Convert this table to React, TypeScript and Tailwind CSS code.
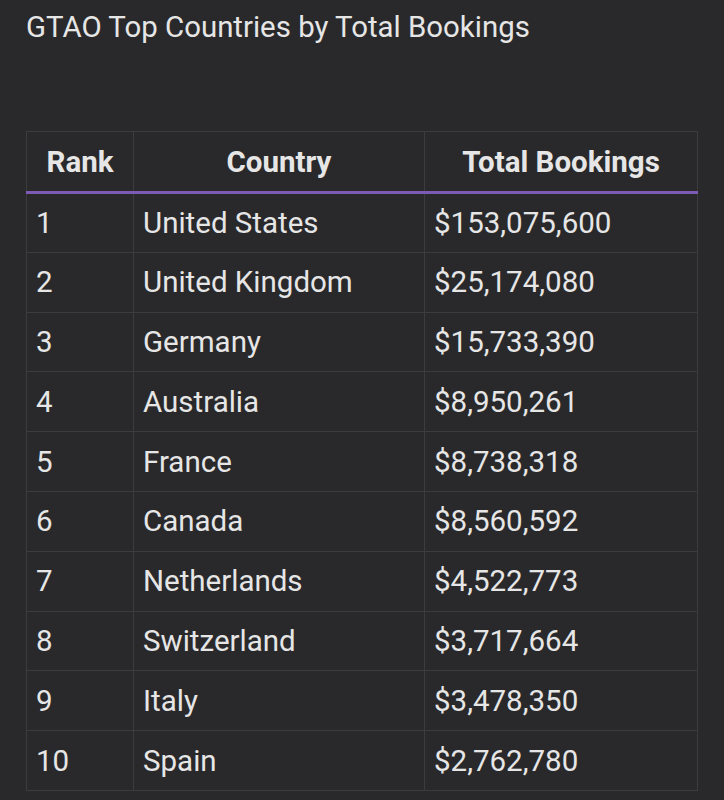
const rows = [
  { rank: 1, country: 'United States', total: '$153,075,600' },
  { rank: 2, country: 'United Kingdom', total: '$25,174,080' },
  { rank: 3, country: 'Germany', total: '$15,733,390' },
  { rank: 4, country: 'Australia', total: '$8,950,261' },
  { rank: 5, country: 'France', total: '$8,738,318' },
  { rank: 6, country: 'Canada', total: '$8,560,592' },
  { rank: 7, country: 'Netherlands', total: '$4,522,773' },
  { rank: 8, country: 'Switzerland', total: '$3,717,664' },
  { rank: 9, country: 'Italy', total: '$3,478,350' },
  { rank: 10, country: 'Spain', total: '$2,762,780' },
];

export default function App() {
  return (
    <div className="min-h-screen w-[724px] bg-[#29292b] text-[#e6e6e6] font-['Roboto',sans-serif]">
      <div className="px-[26px] pt-[9px]">
        <h1 className="text-[29.4px] leading-[36px] font-normal">GTAO Top Countries by Total Bookings</h1>

        <table className="mt-[86px] w-[672px] border-collapse text-[29.5px] leading-[32px]">
          <thead>
            <tr className="h-[61px]">
              <th className="w-[107px] border border-[#3c3c3e] border-b-[3px] border-b-[#7d5bb5] font-bold text-center">Rank</th>
              <th className="w-[291px] border border-[#3c3c3e] border-b-[3px] border-b-[#7d5bb5] font-bold text-center">Country</th>
              <th className="border border-[#3c3c3e] border-b-[3px] border-b-[#7d5bb5] font-bold text-center">Total Bookings</th>
            </tr>
          </thead>
          <tbody>
            {rows.map((r) => (
              <tr key={r.rank} className="h-[59.8px]">
                <td className="border border-[#3c3c3e] px-[9px] text-left">{r.rank}</td>
                <td className="border border-[#3c3c3e] px-[9px] text-left">{r.country}</td>
                <td className="border border-[#3c3c3e] px-[9px] text-left">{r.total}</td>
              </tr>
            ))}
          </tbody>
        </table>
      </div>
    </div>
  );
}
